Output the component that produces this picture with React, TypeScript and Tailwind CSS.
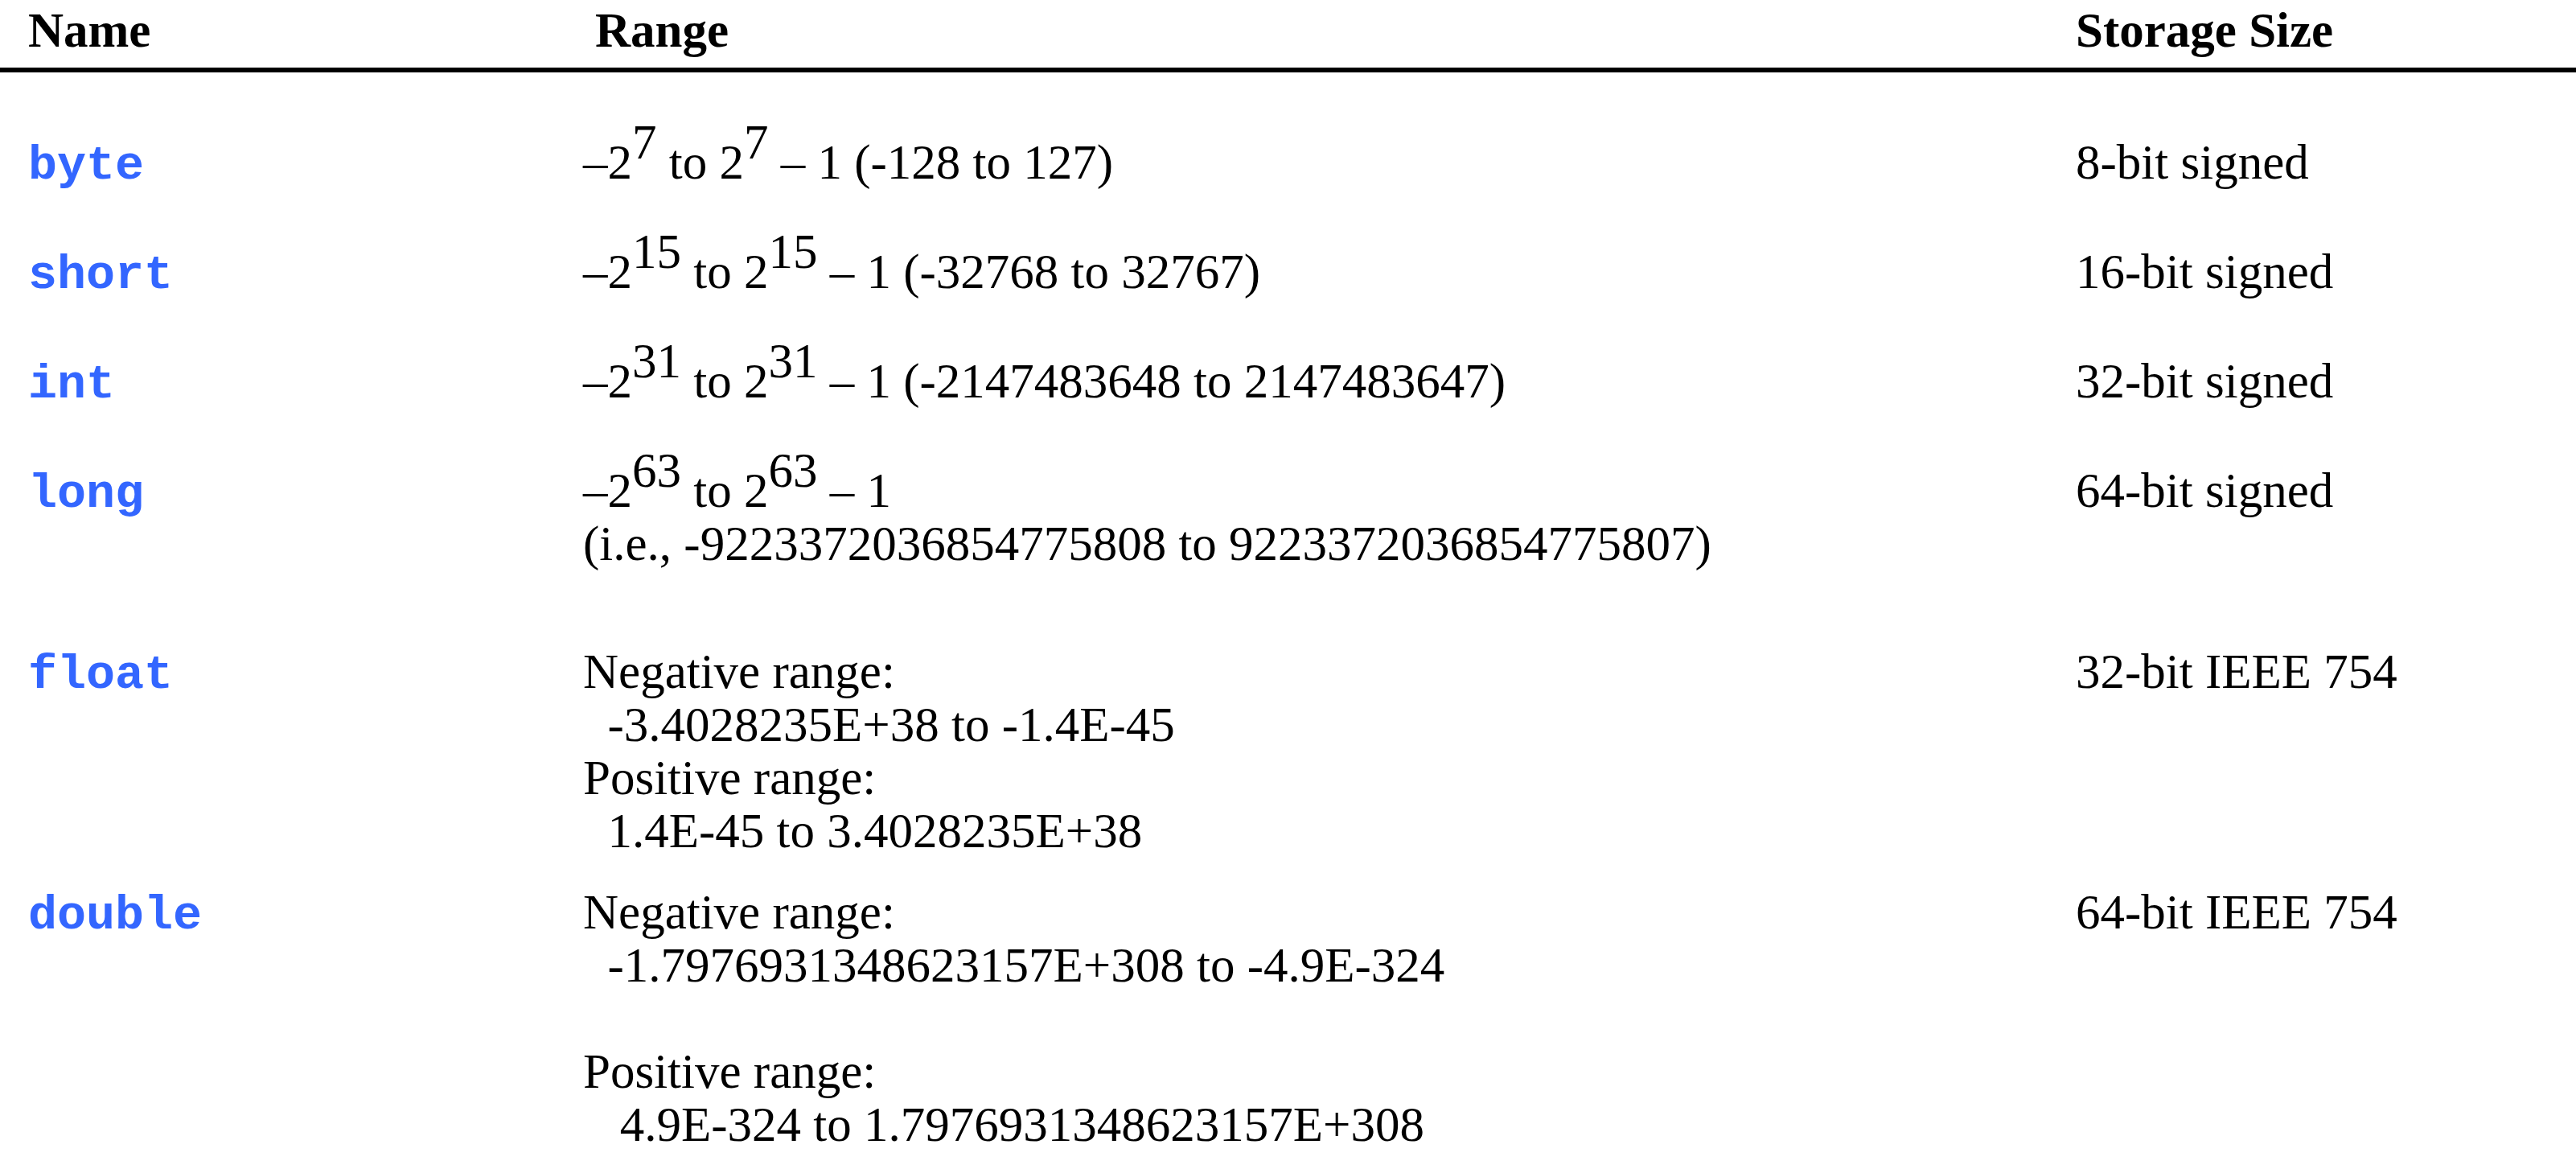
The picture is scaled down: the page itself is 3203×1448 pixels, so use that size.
import type { ReactNode } from 'react'

const Sup = ({ children }: { children: ReactNode }) => (
  <span className="relative -top-[25px]">{children}</span>
)

type Row = {
  name: string
  mt: string
  lines: ReactNode[]
  size: string
}

const rows: Row[] = [
  {
    name: 'byte',
    mt: 'mt-[79px]',
    lines: [<>–2<Sup>7</Sup> to 2<Sup>7</Sup> – 1 (-128 to 127)</>],
    size: '8-bit signed',
  },
  {
    name: 'short',
    mt: 'mt-[70px]',
    lines: [<>–2<Sup>15</Sup> to 2<Sup>15</Sup> – 1 (-32768 to 32767)</>],
    size: '16-bit signed',
  },
  {
    name: 'int',
    mt: 'mt-[70px]',
    lines: [<>–2<Sup>31</Sup> to 2<Sup>31</Sup> – 1 (-2147483648 to 2147483647)</>],
    size: '32-bit signed',
  },
  {
    name: 'long',
    mt: 'mt-[70px]',
    lines: [
      <>–2<Sup>63</Sup> to 2<Sup>63</Sup> – 1</>,
      '(i.e., -9223372036854775808 to 9223372036854775807)',
    ],
    size: '64-bit signed',
  },
  {
    name: 'float',
    mt: 'mt-[93px]',
    lines: [
      'Negative range:',
      '  -3.4028235E+38 to -1.4E-45',
      'Positive range:',
      '  1.4E-45 to 3.4028235E+38',
    ],
    size: '32-bit IEEE 754',
  },
  {
    name: 'double',
    mt: 'mt-[35px]',
    lines: [
      'Negative range:',
      '  -1.7976931348623157E+308 to -4.9E-324',
      '\u00a0',
      'Positive range:',
      '   4.9E-324 to 1.7976931348623157E+308',
    ],
    size: '64-bit IEEE 754',
  },
]

export default function App() {
  return (
    <div className="min-h-screen bg-white text-black font-['Liberation_Serif','Times_New_Roman',serif] text-[61px] leading-[66px]">
      {/* Header */}
      <div className="grid grid-cols-[690px_1856px_1fr] pl-[35px] pt-[5px] font-bold">
        <div>Name</div>
        <div className="pl-[15px]">Range</div>
        <div>Storage Size</div>
      </div>
      <div className="mt-[13px] h-[6px] w-full bg-black" />

      {/* Rows */}
      {rows.map((row) => (
        <div key={row.name} className={`grid grid-cols-[690px_1856px_1fr] items-baseline pl-[35px] ${row.mt}`}>
          <div className="font-['Courier_New','Liberation_Mono',monospace] text-[60px] leading-[50px] font-bold text-[#3366ff]">
            {row.name}
          </div>
          <div className="whitespace-pre">
            {row.lines.map((line, i) => (
              <div key={i}>{line}</div>
            ))}
          </div>
          <div>{row.size}</div>
        </div>
      ))}
    </div>
  )
}
